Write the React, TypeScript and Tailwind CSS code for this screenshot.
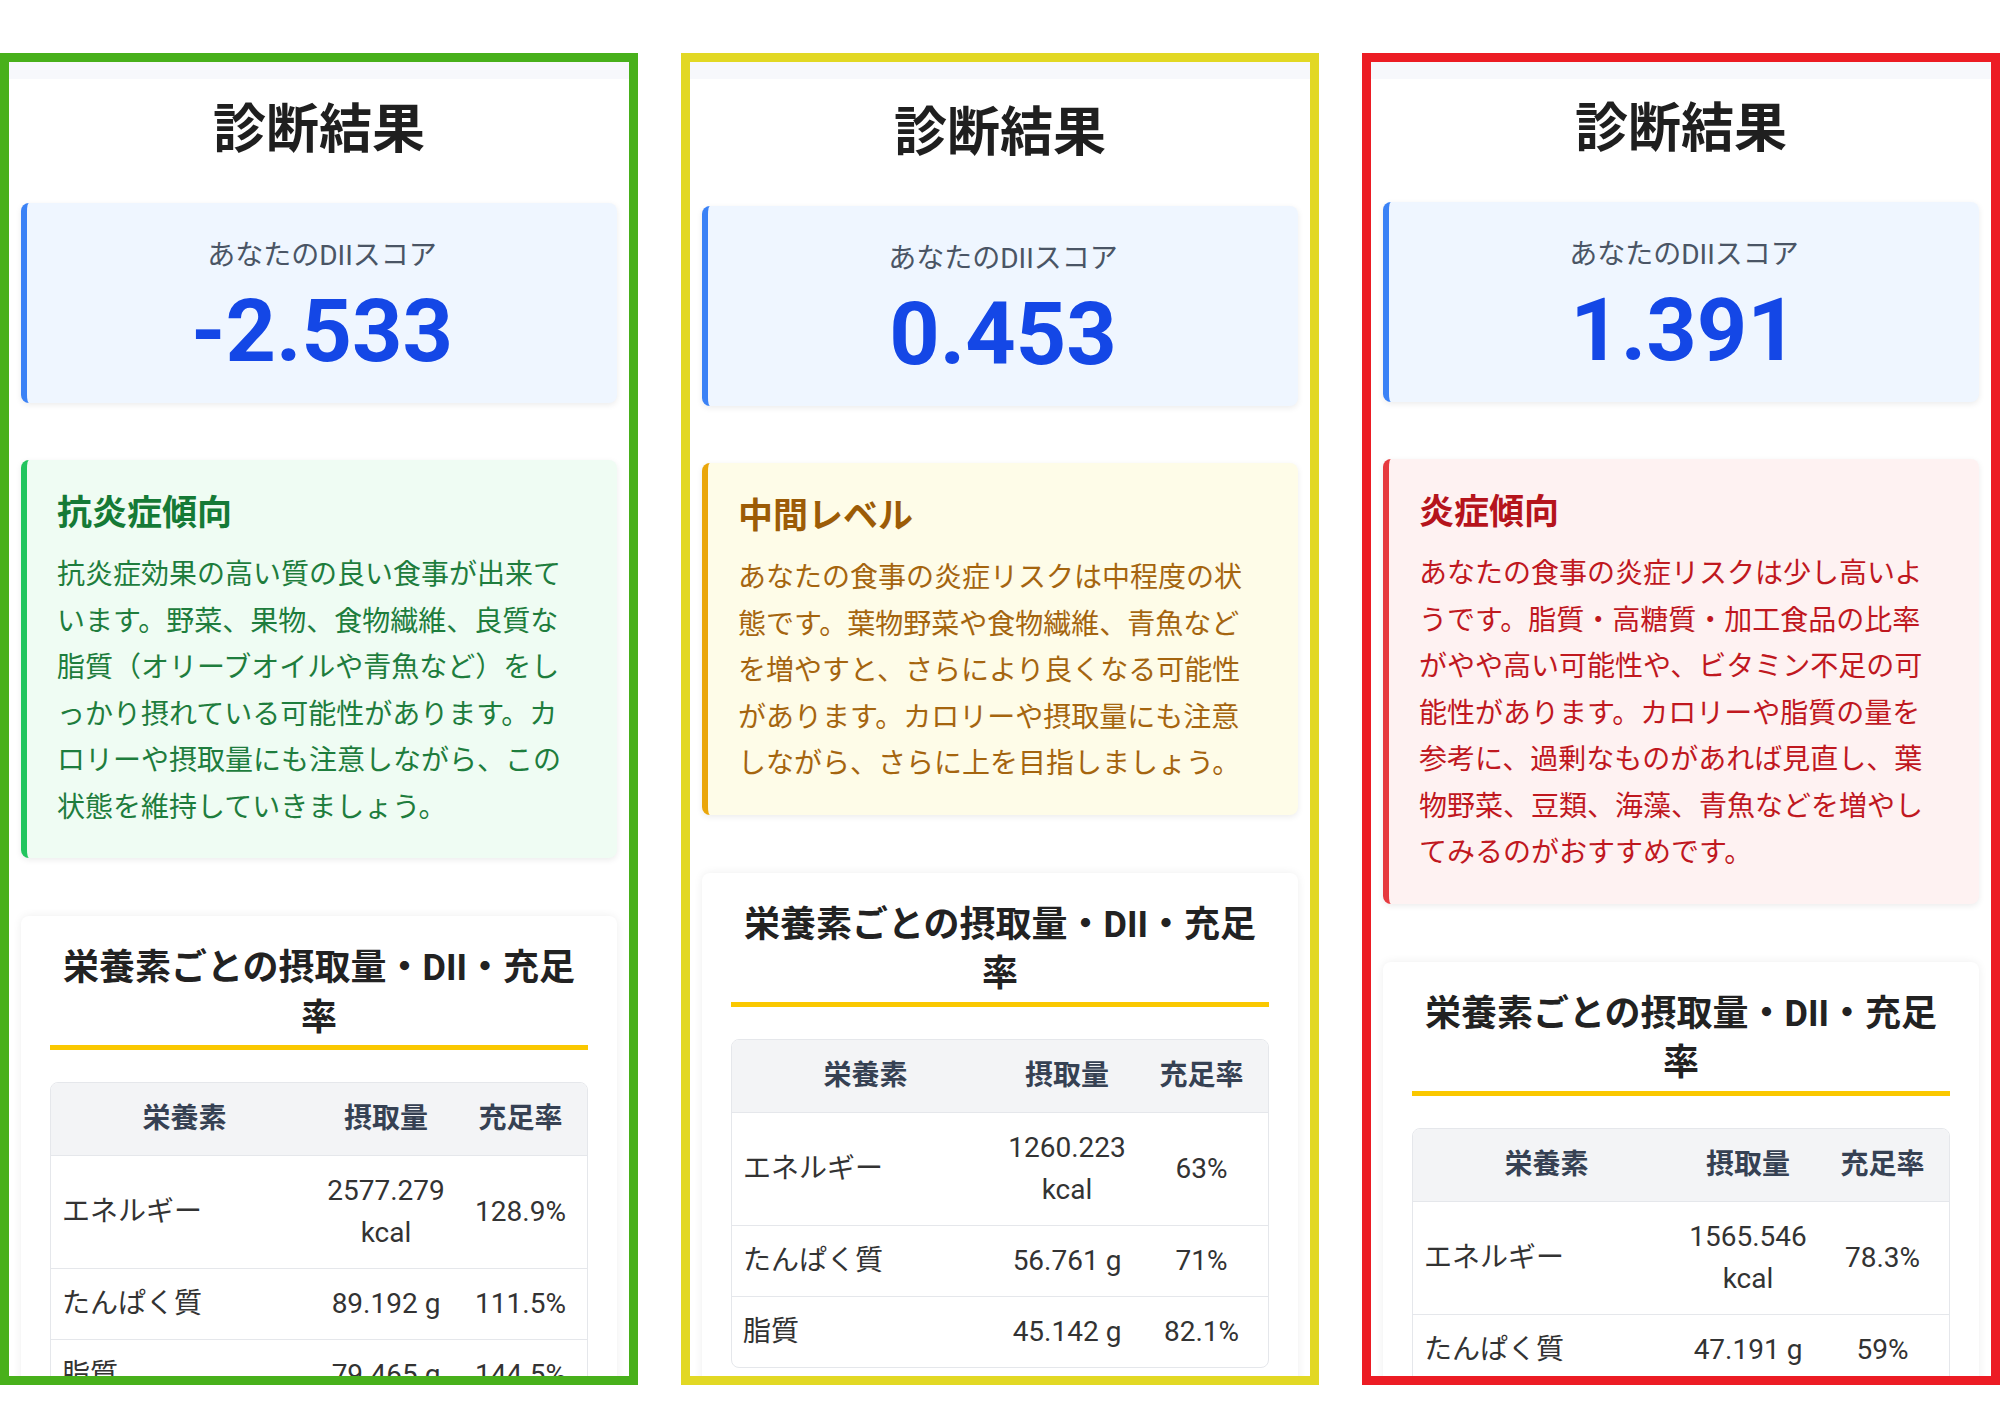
import React from "react";

type Row = [string, string, string];

type Result = {
  frame: string;
  offset: string;
  score: string;
  card: string;
  heading: string;
  body: string;
  level: string;
  message: string;
  rows: Row[];
};

const RESULTS: Result[] = [
  {
    frame: "border-[#48b01b]",
    offset: "mt-[20px]",
    score: "-2.533",
    card: "bg-[#effcf3] border-[#22c55e]",
    heading: "text-[#157a36]",
    body: "text-[#1e7d3d]",
    level: "抗炎症傾向",
    message:
      "抗炎症効果の高い質の良い食事が出来ています。野菜、果物、食物繊維、良質な脂質（オリーブオイルや青魚など）をしっかり摂れている可能性があります。カロリーや摂取量にも注意しながら、この状態を維持していきましょう。",
    rows: [
      ["エネルギー", "2577.279 kcal", "128.9%"],
      ["たんぱく質", "89.192 g", "111.5%"],
      ["脂質", "79.465 g", "144.5%"],
    ],
  },
  {
    frame: "border-[#e2d824]",
    offset: "mt-[23px]",
    score: "0.453",
    card: "bg-[#fefce8] border-[#eaa60a]",
    heading: "text-[#9c5c07]",
    body: "text-[#a5650f]",
    level: "中間レベル",
    message:
      "あなたの食事の炎症リスクは中程度の状態です。葉物野菜や食物繊維、青魚などを増やすと、さらにより良くなる可能性があります。カロリーや摂取量にも注意しながら、さらに上を目指しましょう。",
    rows: [
      ["エネルギー", "1260.223 kcal", "63%"],
      ["たんぱく質", "56.761 g", "71%"],
      ["脂質", "45.142 g", "82.1%"],
    ],
  },
  {
    frame: "border-[#ec1c24]",
    offset: "mt-[19px]",
    score: "1.391",
    card: "bg-[#fef2f2] border-[#e63a3f]",
    heading: "text-[#b5141c]",
    body: "text-[#c0181f]",
    level: "炎症傾向",
    message:
      "あなたの食事の炎症リスクは少し高いようです。脂質・高糖質・加工食品の比率がやや高い可能性や、ビタミン不足の可能性があります。カロリーや脂質の量を参考に、過剰なものがあれば見直し、葉物野菜、豆類、海藻、青魚などを増やしてみるのがおすすめです。",
    rows: [
      ["エネルギー", "1565.546 kcal", "78.3%"],
      ["たんぱく質", "47.191 g", "59%"],
    ],
  },
];

function NutrientTable({ rows }: { rows: Row[] }) {
  return (
    <div className="mt-[32px] rounded-lg border border-gray-200 overflow-hidden">
      <table className="w-full table-fixed border-separate border-spacing-0 text-[28px] leading-[42px]">
        <colgroup>
          <col className="w-[267px]" />
          <col className="w-[136px]" />
          <col />
        </colgroup>
        <thead>
          <tr>
            <th className="bg-gray-100 text-gray-700 font-bold text-center px-[8px] py-[15px]">
              栄養素
            </th>
            <th className="bg-gray-100 text-gray-700 font-bold text-center px-[8px] py-[15px]">
              摂取量
            </th>
            <th className="bg-gray-100 text-gray-700 font-bold text-center px-[8px] py-[15px]">
              充足率
            </th>
          </tr>
        </thead>
        <tbody className="text-[#333]">
          {rows.map((row) => (
            <tr key={row[0]}>
              <td className="border-t border-gray-200 text-left pl-[11px] pr-[8px] py-[14px]">
                {row[0]}
              </td>
              <td className="border-t border-gray-200 text-center px-[8px] py-[14px]">
                {row[1]}
              </td>
              <td className="border-t border-gray-200 text-center px-[8px] py-[14px]">
                {row[2]}
              </td>
            </tr>
          ))}
        </tbody>
      </table>
    </div>
  );
}

function ResultPanel({ r }: { r: Result }) {
  return (
    <section
      className={`w-[638px] h-[1332px] shrink-0 border-[9px] ${r.frame} bg-white overflow-hidden`}
    >
      <div className="h-[17px] bg-[#f7f8fc]" />
      <h1
        className={`${r.offset} text-center text-[53px] leading-[62px] font-bold text-[#1f1f1f]`}
      >
        診断結果
      </h1>

      <div className="mx-[12px] mt-[42px] rounded-lg border-l-[6px] border-[#3b82f6] bg-[#eff6ff] pt-[33px] pb-[27px] text-center shadow-[0_2px_6px_rgba(0,0,0,0.08)]">
        <div className="text-[28px] leading-[40px] text-gray-600">
          あなたのDIIスコア
        </div>
        <div className="mt-[10px] text-[88px] leading-[90px] font-bold text-blue-700">
          {r.score}
        </div>
      </div>

      <div
        className={`mx-[12px] mt-[57px] rounded-lg border-l-[6px] ${r.card} pl-[30px] pr-[45px] pt-[31px] pb-[27px] shadow-[0_2px_6px_rgba(0,0,0,0.08)]`}
      >
        <h3 className={`text-[35px] leading-[46px] font-bold ${r.heading}`}>
          {r.level}
        </h3>
        <p
          className={`mt-[15px] text-[28px] leading-[46.5px] [line-break:loose] [text-spacing-trim:space-all] ${r.body}`}
        >
          {r.message}
        </p>
      </div>

      <div className="mx-[12px] mt-[58px] rounded-lg bg-white px-[29px] pt-[28px] pb-[30px] shadow-[0_0_10px_rgba(0,0,0,0.07)]">
        <h2 className="text-center text-[36px] leading-[49.5px] font-bold text-[#222] border-b-[5px] border-[#fac800] pb-[2px]">
          栄養素ごとの摂取量・DII・充足率
        </h2>
        <NutrientTable rows={r.rows} />
      </div>
    </section>
  );
}

export default function App() {
  return (
    <div className="w-[2000px] h-[1414px] bg-white pt-[53px] flex justify-between [font-family:Roboto,'Noto_Sans_CJK_JP',sans-serif]">
      {RESULTS.map((r) => (
        <ResultPanel key={r.score} r={r} />
      ))}
    </div>
  );
}
